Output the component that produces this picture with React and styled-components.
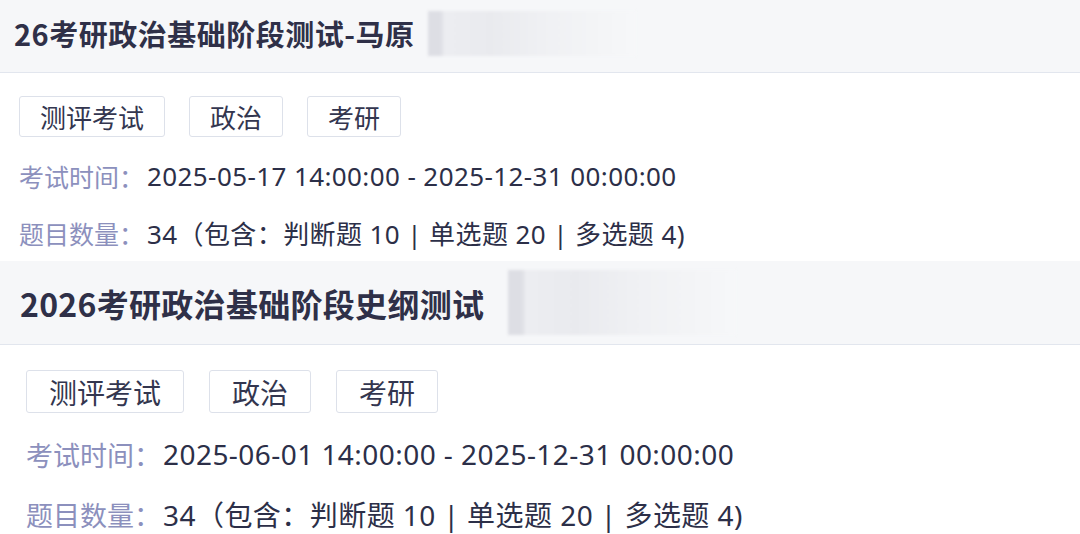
import styled, { createGlobalStyle } from "styled-components";

const GlobalStyle = createGlobalStyle`
  html, body {
    margin: 0;
    padding: 0;
    background: #ffffff;
  }
  body {
    font-family: "Noto Sans CJK SC", "Noto Sans", sans-serif;
    height: 534px;
    overflow: hidden;
  }
`;

const Card = styled.section`
  background: #ffffff;
`;

const Header = styled.div`
  box-sizing: border-box;
  height: ${p => p.$h}px;
  padding: 0 0 ${p => p.$shift}px ${p => p.$left}px;
  display: flex;
  align-items: center;
  gap: ${p => p.$gap}px;
  background: #f6f7f9;
  border-bottom: 1px solid #e2e6ee;
`;

const Title = styled.h2`
  margin: 0;
  font-size: ${p => p.$size}px;
  font-weight: 700;
  color: #2f3048;
  white-space: nowrap;
  letter-spacing: ${p => p.$ls}px;
`;

// blurred / redacted part of the title
const Redacted = styled.div`
  width: ${p => p.$w}px;
  height: ${p => p.$h}px;
  background: linear-gradient(
    90deg,
    #dddee4 0%,
    #dddee4 6%,
    #ecedf1 8%,
    #e9eaee 30%,
    #eff0f3 55%,
    #f3f4f6 80%,
    #f6f7f9 100%
  );
  filter: blur(1.5px);
`;

const Body = styled.div`
  padding: ${p => p.$top}px 0 0 ${p => p.$left}px;
`;

const Tags = styled.div`
  display: flex;
  gap: ${p => p.$gap}px;
  margin-bottom: ${p => p.$mb}px;
`;

const Tag = styled.span`
  box-sizing: border-box;
  height: ${p => p.$h}px;
  padding: 0 ${p => p.$px}px;
  display: inline-flex;
  align-items: center;
  border: 1px solid #dde1ea;
  border-radius: 3px;
  font-size: ${p => p.$size}px;
  color: #33364f;
  white-space: nowrap;
`;

const Row = styled.div`
  height: ${p => p.$h}px;
  display: flex;
  align-items: center;
  white-space: nowrap;
`;

const Label = styled.span`
  font-size: ${p => p.$size}px;
  color: #8c90bd;
`;

const Value = styled.span`
  margin-left: ${p => p.$gap}px;
  font-family: "Noto Sans", "Noto Sans CJK SC", sans-serif;
  font-size: ${p => p.$size}px;
  letter-spacing: ${p => p.$ls}px;
  color: #2c2f48;
`;

const exams = [
  {
    title: "26考研政治基础阶段测试-马原",
    time: "2025-05-17 14:00:00 - 2025-12-31 00:00:00",
    count: "34（包含：判断题 10 | 单选题 20 | 多选题 4)",
    tags: ["测评考试", "政治", "考研"],
    s: {
      headH: 73, shift: 6, titleLeft: 14, titleSize: 29, ls: 0.5, gap: 14,
      blurW: 208, blurH: 45,
      bodyTop: 23, bodyLeft: 19, tagGap: 24, tagH: 41, tagPx: 20, tagSize: 26, tagMb: 10,
      rowH: 57, labelSize: 25, valSize: 26, valLs: 0.4, valGap: 3,
    },
  },
  {
    title: "2026考研政治基础阶段史纲测试",
    time: "2025-06-01 14:00:00 - 2025-12-31 00:00:00",
    count: "34（包含：判断题 10 | 单选题 20 | 多选题 4)",
    tags: ["测评考试", "政治", "考研"],
    s: {
      headH: 84, shift: 0, titleLeft: 20, titleSize: 32, ls: 0.3, gap: 24,
      blurW: 228, blurH: 65,
      bodyTop: 25, bodyLeft: 26, tagGap: 25, tagH: 43, tagPx: 22, tagSize: 28, tagMb: 11,
      rowH: 60, labelSize: 27, valSize: 28, valLs: 0.45, valGap: 2,
    },
  },
];

function ExamCard({ exam }) {
  const s = exam.s;
  return (
    <Card>
      <Header $h={s.headH} $shift={s.shift} $left={s.titleLeft} $gap={s.gap}>
        <Title $size={s.titleSize} $ls={s.ls}>{exam.title}</Title>
        <Redacted $w={s.blurW} $h={s.blurH} />
      </Header>
      <Body $top={s.bodyTop} $left={s.bodyLeft}>
        <Tags $gap={s.tagGap} $mb={s.tagMb}>
          {exam.tags.map(t => (
            <Tag key={t} $h={s.tagH} $px={s.tagPx} $size={s.tagSize}>{t}</Tag>
          ))}
        </Tags>
        <Row $h={s.rowH}>
          <Label $size={s.labelSize}>考试时间：</Label>
          <Value $gap={s.valGap} $size={s.valSize} $ls={s.valLs}>{exam.time}</Value>
        </Row>
        <Row $h={s.rowH}>
          <Label $size={s.labelSize}>题目数量：</Label>
          <Value $gap={s.valGap} $size={s.valSize} $ls={s.valLs}>{exam.count}</Value>
        </Row>
      </Body>
    </Card>
  );
}

export default function App() {
  return (
    <>
      <GlobalStyle />
      {exams.map(e => (
        <ExamCard key={e.title} exam={e} />
      ))}
    </>
  );
}
